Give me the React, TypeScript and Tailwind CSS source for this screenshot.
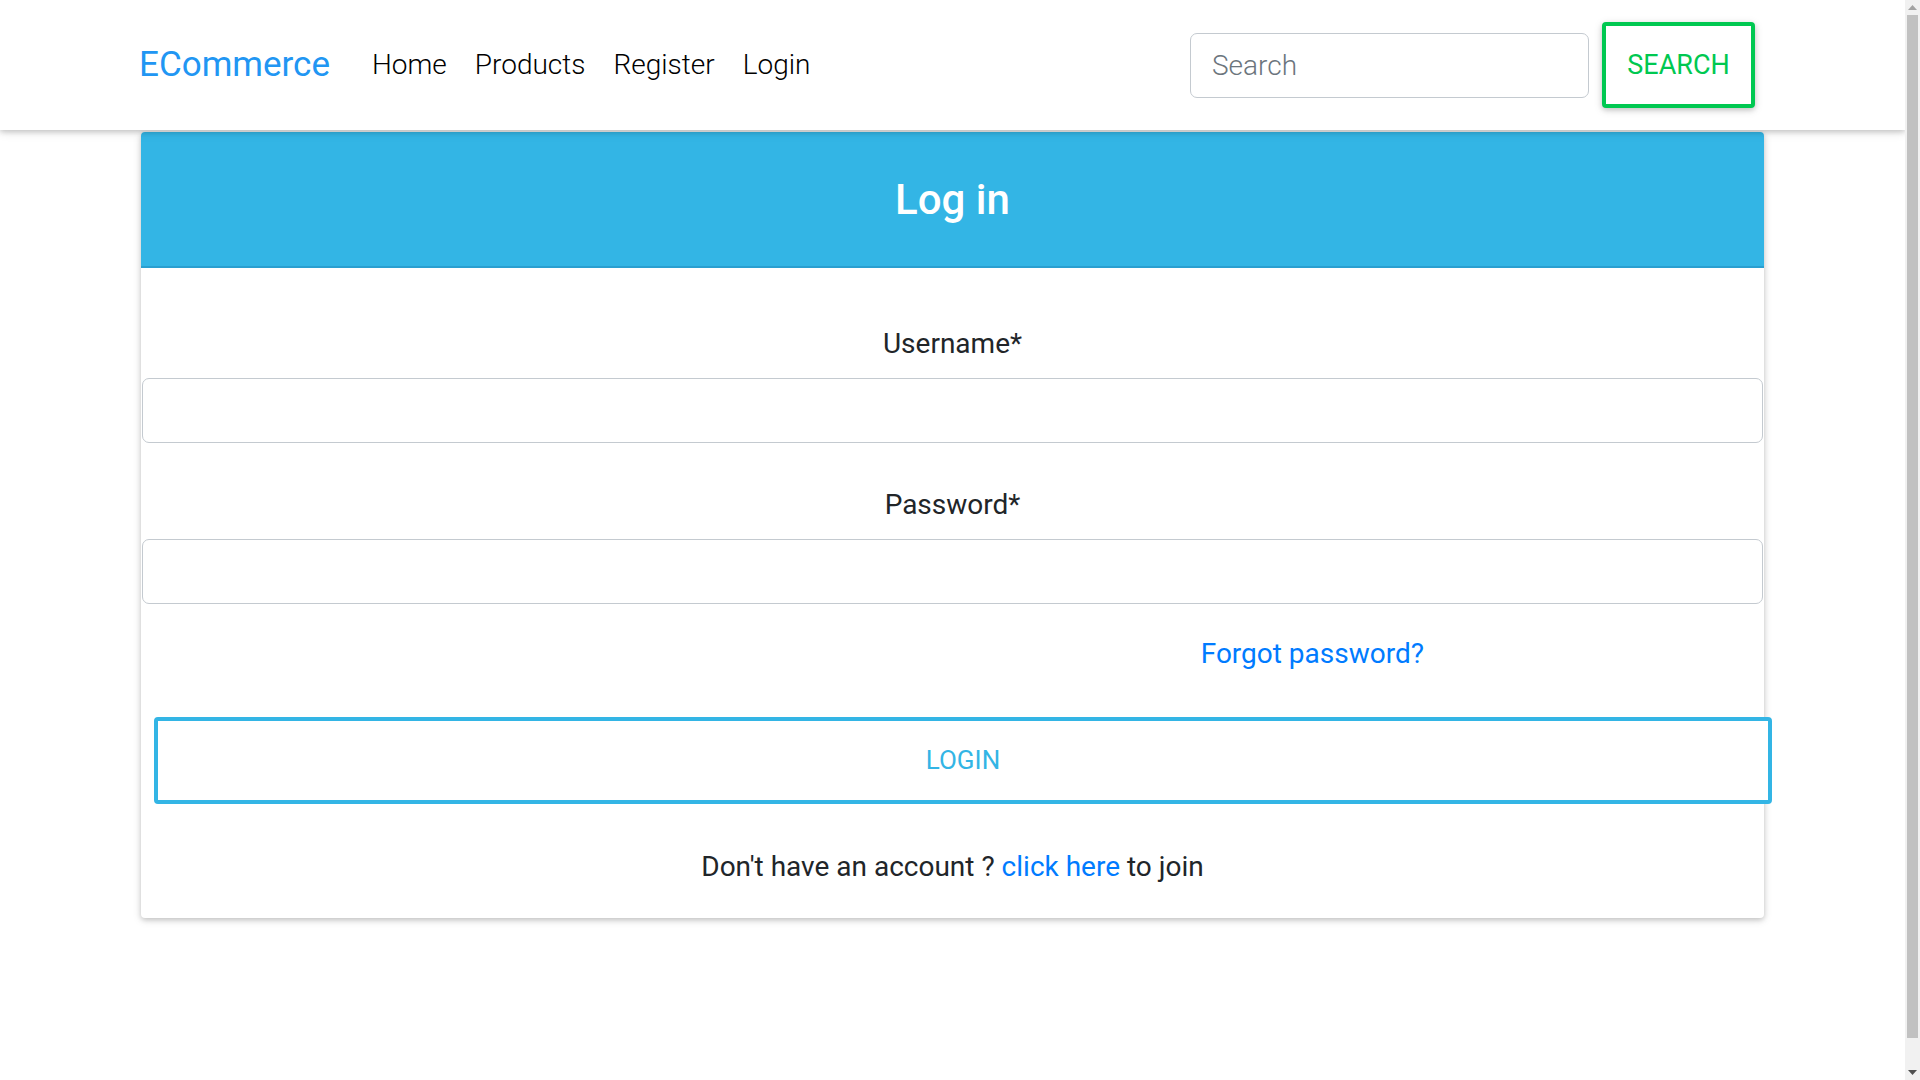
import { useState } from "react";

const links = ["Home", "Products", "Register", "Login"];

const Navbar = () => {
  const [query, setQuery] = useState("");

  return (
    <nav className="relative z-10 h-[130px] bg-white shadow-[0_2px_5px_0_rgba(0,0,0,0.16),0_2px_10px_0_rgba(0,0,0,0.12)]">
      <div className="flex h-full items-center pl-[139px] pr-[150px]">
        <a href="#" className="text-[35px] leading-[52px] text-[#2196f3]">
          ECommerce
        </a>
        <ul className="ml-[28px] flex items-center">
          {links.map((item) => (
            <li key={item}>
              <a
                href="#"
                className="px-[14px] text-[28px] font-light leading-[42px] text-black"
              >
                {item}
              </a>
            </li>
          ))}
        </ul>
        <form className="ml-auto flex items-center" onSubmit={(e) => e.preventDefault()}>
          <input
            value={query}
            onChange={(e) => setQuery(e.target.value)}
            placeholder="Search"
            className="h-[65px] w-[399px] rounded-[7px] border border-[#c4cad0] bg-white px-[21px] text-[28px] font-light text-[#495057] outline-none placeholder:text-[#6c757d]"
          />
          <button
            type="submit"
            className="ml-[13px] h-[86px] w-[153px] rounded-[4px] border-4 border-[#00c851] bg-white text-[27px] uppercase text-[#00c851] shadow-[0_2px_5px_0_rgba(0,0,0,0.16),0_2px_10px_0_rgba(0,0,0,0.12)]"
          >
            Search
          </button>
        </form>
      </div>
    </nav>
  );
};

const Field = ({ label, type }: { label: string; type: string }) => (
  <div className="flex flex-col">
    <label className="mb-[13px] text-center text-[28px] leading-[42px] text-[#212529]">
      {label}
    </label>
    <input
      type={type}
      className="mx-[1px] h-[65px] rounded-[7px] border border-[#c4cad0] bg-white px-[21px] text-[28px] outline-none"
    />
  </div>
);

const LoginCard = () => (
  <div className="mx-auto mt-[2px] w-[1623px] rounded-[4px] bg-white shadow-[0_2px_5px_0_rgba(0,0,0,0.16),0_2px_10px_0_rgba(0,0,0,0.12)]">
    <div className="flex h-[136px] items-center justify-center rounded-t-[4px] border-b-2 border-[#2a9fd0] bg-[#33b5e5]">
      <h3 className="text-[42px] font-medium text-white">Log in</h3>
    </div>
    <div className="flex flex-col pb-[30px] pt-[55px]">
      <Field label="Username*" type="text" />
      <div className="mt-[41px]">
        <Field label="Password*" type="password" />
      </div>
      <div className="mt-[29px] flex justify-end pr-[340px]">
        <a href="#" className="text-[28px] leading-[42px] text-[#007bff]">
          Forgot password?
        </a>
      </div>
      <button className="ml-[13px] mt-[42px] h-[87px] w-[1618px] rounded-[4px] border-4 border-[#33b5e5] bg-white text-[26px] uppercase text-[#33b5e5]">
        Login
      </button>
      <p className="mt-[42px] text-center text-[28px] leading-[42px] text-[#212529]">
        Don't have an account ?{" "}
        <a href="#" className="text-[#007bff]">
          click here
        </a>{" "}
        to join
      </p>
    </div>
  </div>
);

// classic browser scrollbar, drawn since the headless page hides its own
const Scrollbar = () => (
  <div className="flex w-[15px] shrink-0 flex-col bg-[#f1f1f1]">
    <div className="flex h-[15px] items-center justify-center">
      <svg width="9" height="5" viewBox="0 0 9 5">
        <path d="M0 5 L4.5 0 L9 5 Z" fill="#a3a3a3" />
      </svg>
    </div>
    <div className="flex flex-1 flex-col px-[2px] pb-[27px]">
      <div className="flex-1 bg-[#c1c1c1]" />
    </div>
    <div className="flex h-[15px] items-center justify-center">
      <svg width="9" height="5" viewBox="0 0 9 5">
        <path d="M0 0 L9 0 L4.5 5 Z" fill="#505050" />
      </svg>
    </div>
  </div>
);

export default function App() {
  return (
    <div className="flex h-screen bg-white font-['Roboto','Liberation_Sans',sans-serif]">
      <div className="min-w-0 flex-1 overflow-hidden">
        <Navbar />
        <LoginCard />
      </div>
      <Scrollbar />
    </div>
  );
}
